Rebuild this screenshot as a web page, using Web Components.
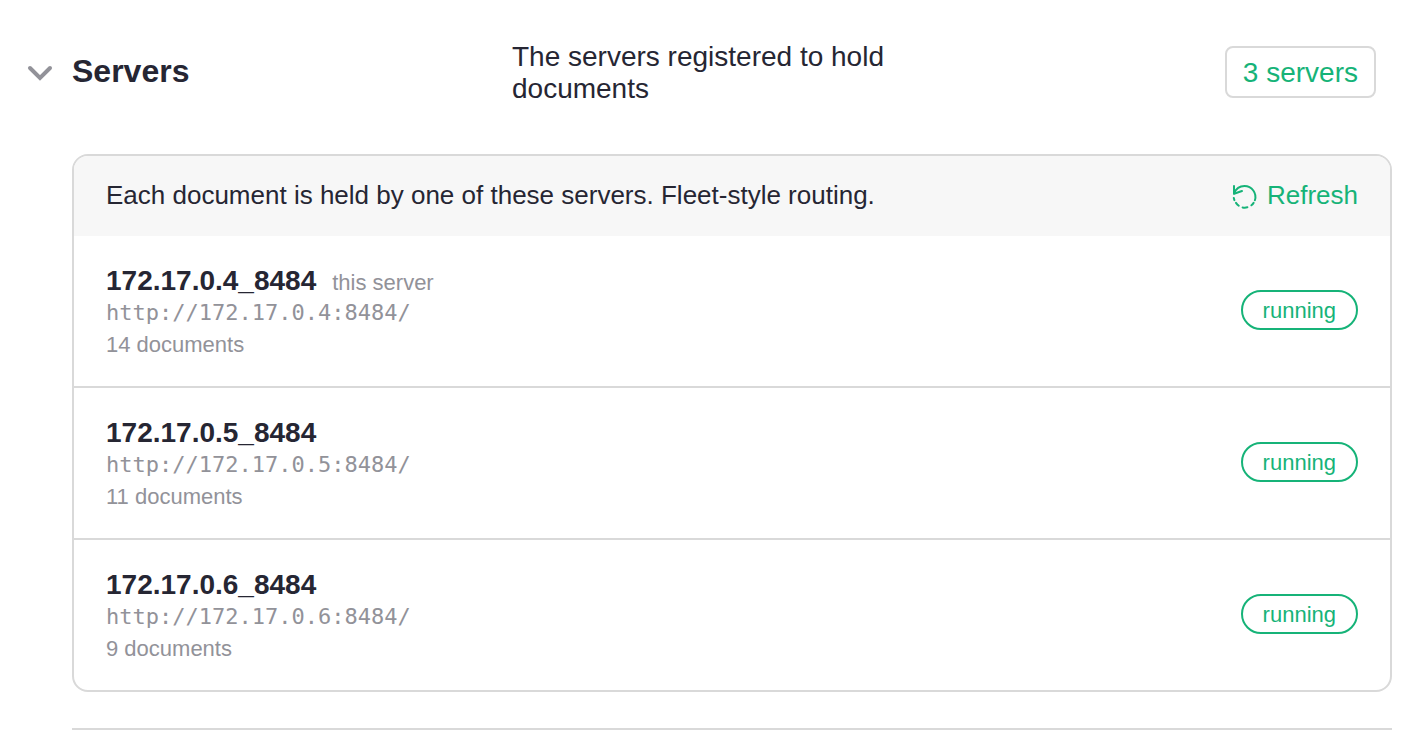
<!DOCTYPE html>
<html lang="en">
<head>
<meta charset="utf-8">
<title>Servers</title>
<style>
  body {
    margin: 0;
    background: #fff;
    color: #262633;
    font: 28px/32px "Liberation Sans", Arial, sans-serif;
    --text: #262633;
    --accent: #16b378;
    --muted: #929299;
    --line: #d9d9d9;
    --panel: #f7f7f7;
  }
</style>
</head>
<body>
<admin-section>
  <span slot="title">Servers</span>
  <span slot="description">The servers registered to hold documents</span>
  <span slot="value">3 servers</span>
  <server-panel>
    <span slot="note">Each document is held by one of these servers. Fleet-style routing.</span>
    <server-row>
      <span slot="name">172.17.0.4_8484</span>
      <span slot="tag">this server</span>
      <span slot="url">http://172.17.0.4:8484/</span>
      <span slot="count">14 documents</span>
      <status-pill>running</status-pill>
    </server-row>
    <server-row>
      <span slot="name">172.17.0.5_8484</span>
      <span slot="url">http://172.17.0.5:8484/</span>
      <span slot="count">11 documents</span>
      <status-pill>running</status-pill>
    </server-row>
    <server-row>
      <span slot="name">172.17.0.6_8484</span>
      <span slot="url">http://172.17.0.6:8484/</span>
      <span slot="count">9 documents</span>
      <status-pill>running</status-pill>
    </server-row>
  </server-panel>
</admin-section>

<script>
  function define(name, html, setup) {
    const template = document.createElement('template');
    template.innerHTML = html;
    customElements.define(name, class extends HTMLElement {
      constructor() {
        super();
        const root = this.attachShadow({ mode: 'open' });
        root.append(template.content.cloneNode(true));
        if (setup) setup(root);
      }
    });
  }

  define('admin-section', `
    <style>
      :host { display: block; padding: 39px 24px 0; }
      header { display: flex; align-items: center; padding-right: 16px; }
      h2 { flex: 0 0 488px; margin: 0; padding-bottom: 2px; font-size: 32px; line-height: 36px; }
      button {
        display: flex; align-items: center; gap: 16px; padding: 0;
        border: 0; background: none; color: inherit; font: inherit; cursor: pointer;
      }
      svg { display: block; width: 32px; height: 32px; color: var(--muted); }
      button[aria-expanded="false"] svg { transform: rotate(-90deg); }
      .description { flex: 0 1 400px; margin: 0; padding-top: 2px; }
      .value {
        margin-left: auto; padding: 9px 16px 7px; white-space: nowrap;
        border: 2px solid var(--line); border-radius: 8px; color: var(--accent);
      }
      .content { margin: 49px 0 0 48px; padding-bottom: 36px; border-bottom: 2px solid var(--line); }
      .content[hidden] { display: none; }
    </style>
    <header>
      <h2><button type="button" aria-expanded="true" aria-controls="content">
        <svg viewBox="0 0 32 32" fill="none" stroke="currentColor" stroke-width="4" stroke-linecap="round" stroke-linejoin="miter" aria-hidden="true"><path d="M6 13L16 23L26 13"/></svg>
        <slot name="title"></slot>
      </button></h2>
      <p class="description"><slot name="description"></slot></p>
      <div class="value"><slot name="value"></slot></div>
    </header>
    <div class="content" id="content"><slot></slot></div>
  `, root => {
    const button = root.querySelector('button');
    const content = root.querySelector('.content');
    button.addEventListener('click', () => {
      content.hidden = !content.hidden;
      button.setAttribute('aria-expanded', String(!content.hidden));
    });
  });

  define('server-panel', `
    <style>
      :host { display: block; border: 2px solid var(--line); border-radius: 16px; overflow: hidden; }
      .bar {
        display: flex; align-items: center; justify-content: space-between; gap: 24px;
        padding: 23px 32px 25px; background: var(--panel); font-size: 26px;
      }
      p { margin: 0; }
      button {
        display: flex; align-items: center; gap: 8px; padding: 0;
        border: 0; background: none; color: var(--accent); font: inherit; cursor: pointer;
      }
      svg { display: block; width: 32px; height: 32px; }
      ::slotted(server-row:not(:last-of-type)) { border-bottom: 2px solid var(--line); }
    </style>
    <div class="bar">
      <p><slot name="note"></slot></p>
      <button type="button">
        <svg viewBox="0 0 32 32" fill="none" stroke="currentColor" stroke-width="2" stroke-linecap="round" stroke-linejoin="round" aria-hidden="true">
          <path d="M7 14.5C9 9.5 12.5 7 17.5 7A11 11 0 0 1 27.9 21.3"/>
          <path d="M7 7V14.8L15 12"/>
          <path d="M26.6 23.9Q25.7 25.3 24.4 26.3M20.4 28.3Q18 28.9 15.6 28.4M11.8 26.7Q10.2 25.6 9 23.9M7.4 21.1Q7 20.1 6.8 18.9"/>
        </svg>
        Refresh
      </button>
    </div>
    <slot></slot>
  `);

  define('server-row', `
    <style>
      :host {
        display: flex; align-items: center; justify-content: space-between; gap: 24px;
        padding: 22px 32px 24px; font-size: 22px; color: var(--muted);
      }
      .details { padding: 7px 0 1px; }
      .heading { display: flex; align-items: baseline; gap: 16px; }
      .name { color: var(--text); font-size: 28px; font-weight: bold; }
      .tag { line-height: 24px; }
      .url { font-family: "DejaVu Sans Mono", monospace; }
    </style>
    <div class="details">
      <div class="heading">
        <div class="name"><slot name="name"></slot></div>
        <div class="tag"><slot name="tag"></slot></div>
      </div>
      <div class="url"><slot name="url"></slot></div>
      <div><slot name="count"></slot></div>
    </div>
    <slot></slot>
  `);

  define('status-pill', `
    <style>
      :host {
        display: block; flex: none; padding: 5px 20px 3px; line-height: 28px; white-space: nowrap;
        border: 2px solid var(--accent); border-radius: 20px; color: var(--accent);
      }
    </style>
    <slot></slot>
  `);
</script>
</body>
</html>
